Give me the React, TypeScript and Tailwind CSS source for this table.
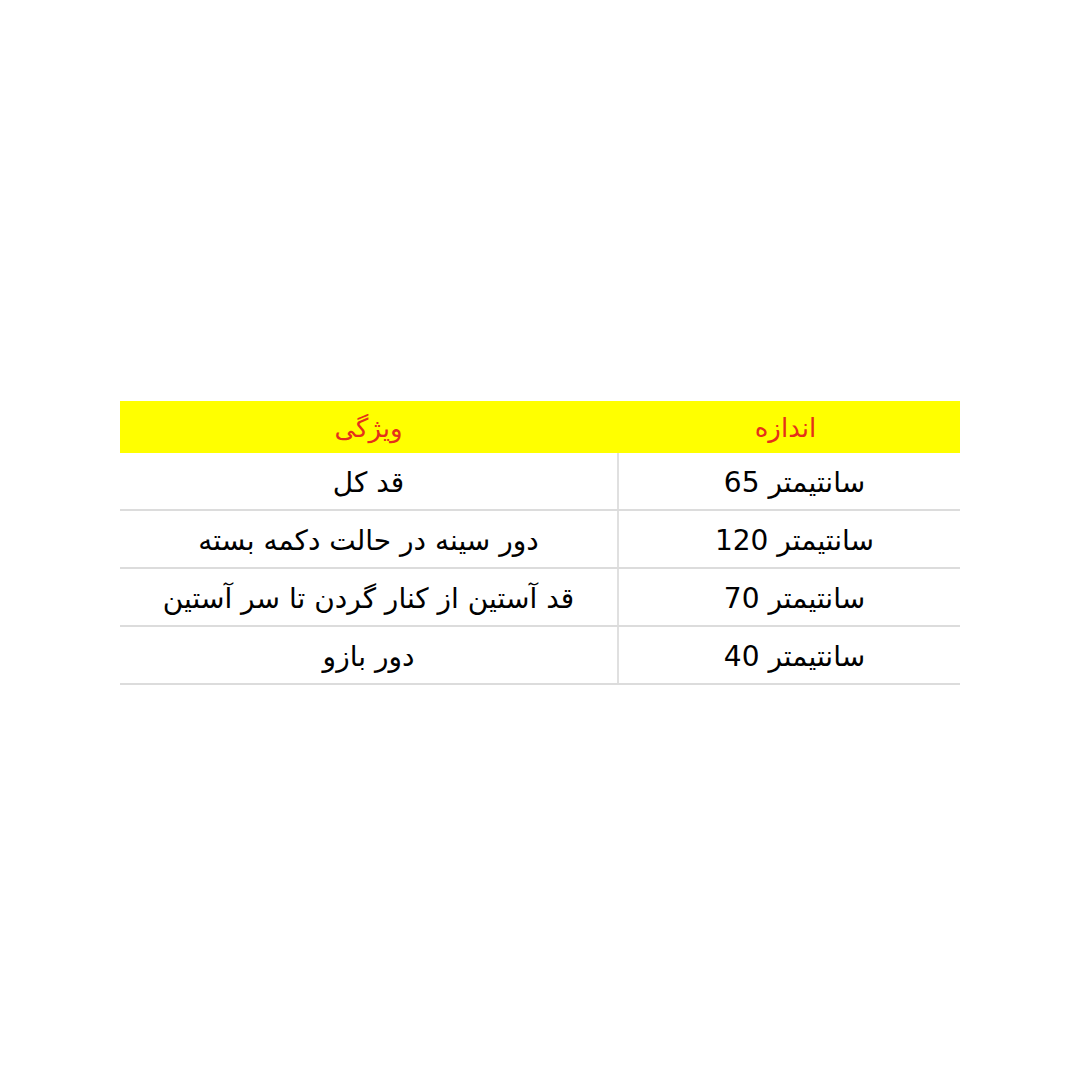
import React from 'react';

const rows = [
  { size: 'سانتیمتر 65', feature: 'قد کل' },
  { size: 'سانتیمتر 120', feature: 'دور سینه در حالت دکمه بسته' },
  { size: 'سانتیمتر 70', feature: 'قد آستین از کنار گردن تا سر آستین' },
  { size: 'سانتیمتر 40', feature: 'دور بازو' },
];

export default function App() {
  return (
    <div className="w-[1080px] h-[1080px] bg-white flex items-start justify-center pt-[401px] font-['DejaVu_Sans',sans-serif]">
      <div dir="rtl" className="w-[840px]">
        {/* Header */}
        <div className="grid grid-cols-[343px_497px] h-[52px] bg-[#ffff00] text-[#e5301a] text-[26px]">
          <div className="flex items-center justify-center pr-[6px] pt-[2px]">اندازه</div>
          <div className="flex items-center justify-center pt-[2px]">ویژگی</div>
        </div>

        {/* Body */}
        {rows.map((row) => (
          <div
            key={row.size}
            className="grid grid-cols-[343px_497px] h-[58px] border-b-2 border-[#dcdcdc] text-black text-[28px]"
          >
            <div className="flex items-center justify-center pl-[10px] pt-[4px] border-l-2 border-[#e0e0e0]">
              {row.size}
            </div>
            <div className="flex items-center justify-center pt-[4px]">{row.feature}</div>
          </div>
        ))}
      </div>
    </div>
  );
}
